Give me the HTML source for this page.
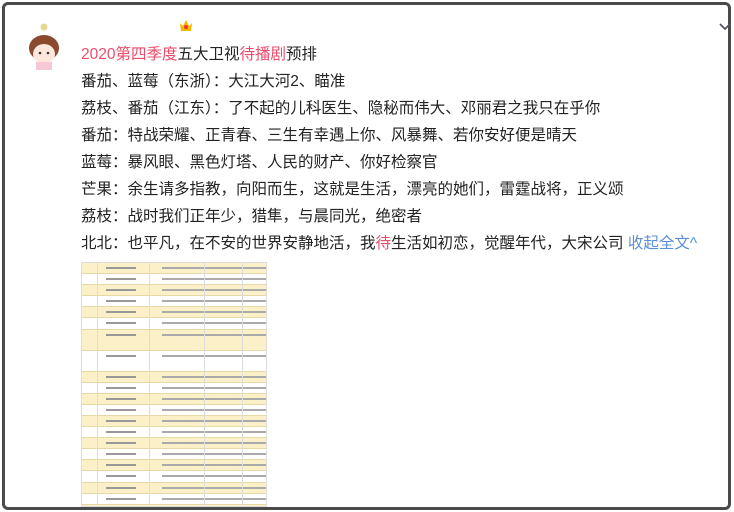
<!DOCTYPE html>
<html><head><meta charset="utf-8"><style>
body{margin:0;width:734px;height:512px;background:#fff;overflow:hidden;font-family:"Liberation Sans","Noto Sans CJK SC",sans-serif;}
.frame{position:absolute;left:2px;top:2px;width:729px;height:508px;border:3px solid #4a4a4a;border-radius:6px;box-sizing:border-box;}
.t{position:absolute;left:81px;font-size:15.5px;color:#222;white-space:nowrap;line-height:20px}
.r{color:#eb4d6b}.b{color:#5b8fd9}
.row{height:10.1px;border-bottom:1px solid #e8d8a8;position:relative}
.row:nth-child(odd){background:#fbf0c8}
.row::before{content:"";position:absolute;left:24px;top:4px;width:30px;height:2px;background:#999}
.row::after{content:"";position:absolute;left:80px;top:4px;width:90px;height:2px;background:#aaa;box-shadow:50px 0 0 -0px #aaa}
</style></head><body>
<div class="frame"></div>
<svg style="position:absolute;left:718px;top:22px" width="14" height="10"><path d="M2 2 L7 7 L12 2" stroke="#556" stroke-width="1.8" fill="none"/></svg>
<svg style="position:absolute;left:22px;top:22px" width="44" height="50">
<circle cx="22" cy="5" r="3.5" fill="#e6d890"/>
<ellipse cx="22" cy="26" rx="15" ry="13" fill="#8b4a2e"/>
<ellipse cx="22" cy="32" rx="11" ry="10" fill="#fde8de"/>
<path d="M10 24 Q22 14 34 24 L34 20 Q22 10 10 20Z" fill="#8b4a2e"/>
<circle cx="18" cy="31" r="1.3" fill="#333"/><circle cx="26" cy="31" r="1.3" fill="#333"/>
<rect x="14" y="40" width="16" height="8" fill="#f6c8d4"/>
</svg>
<svg style="position:absolute;left:178px;top:17px" width="16" height="16"><path d="M2 6 L5 9 L8 3 L11 9 L14 6 L13 14 H3Z" fill="#f5b800"/><circle cx="8" cy="10" r="2" fill="#e33"/></svg>
<div class="t" style="top:45px"><span class="r">2020第四季度</span>五大卫视<span class="r">待播剧</span>预排</div>
<div class="t" style="top:72px">番茄、蓝莓（东浙）：大江大河2、瞄准</div>
<div class="t" style="top:99px">荔枝、番茄（江东）：了不起的儿科医生、隐秘而伟大、邓丽君之我只在乎你</div>
<div class="t" style="top:126px">番茄：特战荣耀、正青春、三生有幸遇上你、风暴舞、若你安好便是晴天</div>
<div class="t" style="top:153px">蓝莓：暴风眼、黑色灯塔、人民的财产、你好检察官</div>
<div class="t" style="top:180px">芒果：余生请多指教，向阳而生，这就是生活，漂亮的她们，雷霆战将，正义颂</div>
<div class="t" style="top:207px">荔枝：战时我们正年少，猎隼，与晨同光，绝密者</div>
<div class="t" style="top:234px">北北：也平凡，在不安的世界安静地活，我<span class="r">待</span>生活如初恋，觉醒年代，大宋公司 <span class="b">收起全文^</span></div>
<div style="position:absolute;left:81px;top:262px;width:184px;height:243px;border:1px solid #ddd;overflow:hidden">
<div class="row"></div><div class="row"></div><div class="row"></div><div class="row"></div><div class="row"></div><div class="row"></div><div class="row" style="height:20px"></div><div class="row" style="height:20px"></div><div class="row"></div><div class="row"></div><div class="row"></div><div class="row"></div><div class="row"></div><div class="row"></div><div class="row"></div><div class="row"></div><div class="row"></div><div class="row"></div><div class="row"></div><div class="row"></div><div class="row"></div><div class="row"></div>
<div style="position:absolute;left:15px;top:0;width:1px;height:100%;background:#ddd"></div>
<div style="position:absolute;left:67px;top:0;width:1px;height:100%;background:#ddd"></div>
<div style="position:absolute;left:122px;top:0;width:1px;height:100%;background:#ddd"></div>
<div style="position:absolute;left:160px;top:0;width:1px;height:100%;background:#ddd"></div>
</div>
</body></html>
